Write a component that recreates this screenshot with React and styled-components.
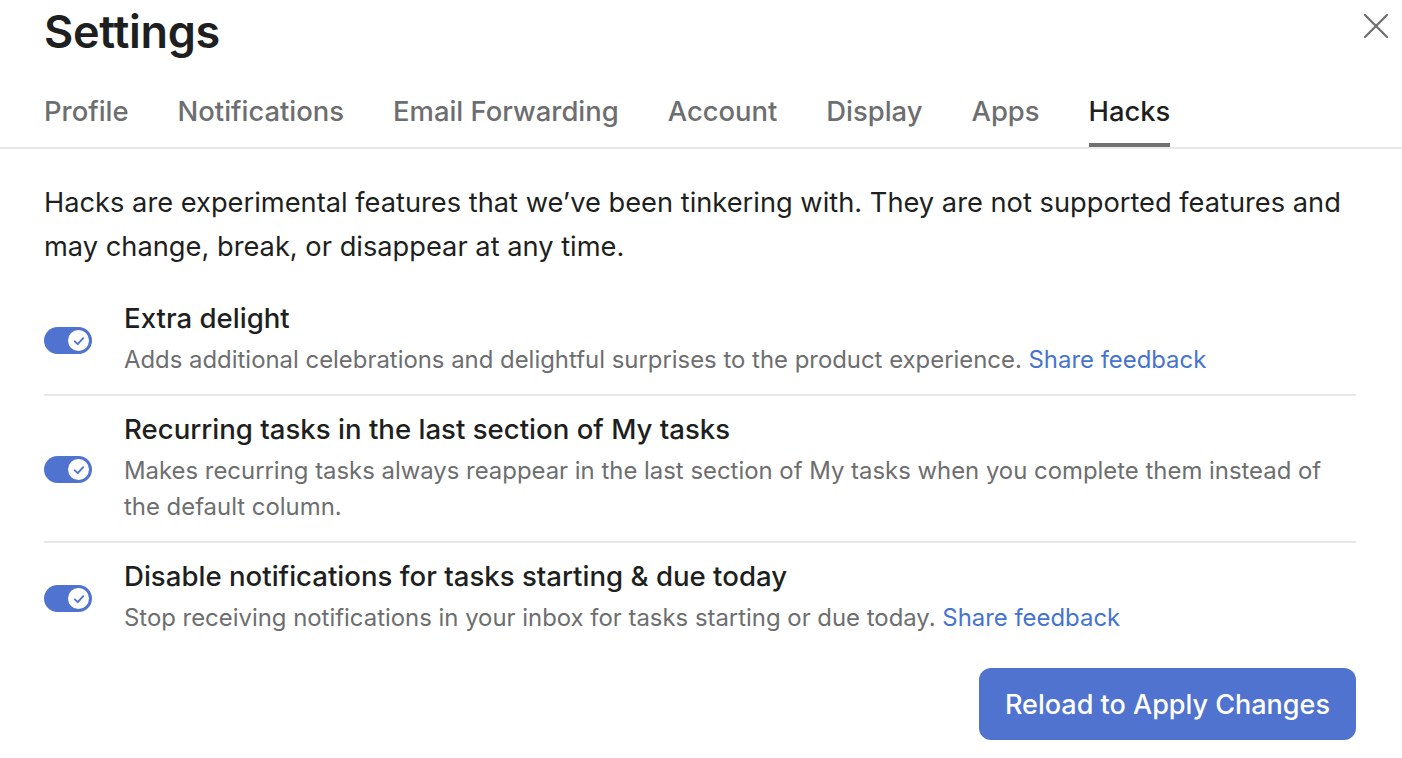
import React from "react";
import styled, { createGlobalStyle } from "styled-components";

const Global = createGlobalStyle`
  html, body { margin: 0; padding: 0; background: #ffffff; }
  body { font-family: Inter, "Noto Sans", "Liberation Sans", sans-serif; color: #1e1f21; }
  * { box-sizing: border-box; }
`;

const Page = styled.div`
  width: 1402px;
  height: 758px;
  background: #fff;
  overflow: hidden;
  display: flex;
  flex-direction: column;
`;

const Header = styled.div`
  position: relative;
  padding: 6px 44px 0 44px;
`;

const Title = styled.h1`
  margin: 0;
  font-size: 45px;
  line-height: 52px;
  font-weight: 600;
  letter-spacing: -0.3px;
  color: #1e1f21;
`;

const CloseButton = styled.button`
  position: absolute;
  top: 12px;
  right: 12px;
  width: 28px;
  height: 28px;
  padding: 0;
  border: none;
  background: transparent;
  display: flex;
  align-items: center;
  justify-content: center;
  cursor: pointer;
`;

const TabBar = styled.div`
  display: flex;
  gap: 49px;
  padding: 0 44px;
  margin-top: 37px;
  border-bottom: 2px solid #e8e8e9;
`;

const Tab = styled.div`
  font-size: 27.4px;
  line-height: 32px;
  font-weight: 500;
  white-space: nowrap;
  color: ${(p) => (p.$active ? "#1e1f21" : "#6d6e6f")};
  padding-bottom: 16px;
  border-bottom: 4px solid ${(p) => (p.$active ? "#6f6f70" : "transparent")};
`;

const Body = styled.div`
  padding: 32px 46px 0 44px;
  display: flex;
  flex-direction: column;
`;

const Intro = styled.p`
  margin: 0 0 16px 0;
  font-size: 27.25px;
  line-height: 44px;
  color: #1e1f21;
`;

const Row = styled.div`
  display: flex;
  gap: 32px;
  padding: 15px 0 16px 0;
  border-bottom: ${(p) => (p.$last ? "none" : "2px solid #e8e8e9")};
`;

const ToggleTrack = styled.div`
  flex: none;
  width: 48px;
  height: 27px;
  margin-top: ${(p) => p.$top}px;
  border-radius: 14px;
  background: #4f73cf;
  position: relative;
`;

const Knob = styled.div`
  position: absolute;
  right: 3px;
  top: 3px;
  width: 21px;
  height: 21px;
  border-radius: 50%;
  background: #fff;
  display: flex;
  align-items: center;
  justify-content: center;
`;

const RowText = styled.div`
  display: flex;
  flex-direction: column;
`;

const RowTitle = styled.div`
  font-size: 27.6px;
  line-height: 36px;
  font-weight: 500;
  color: #1e1f21;
  margin-bottom: 6px;
`;

const RowDesc = styled.div`
  font-size: 23.9px;
  line-height: 36px;
  color: #6d6e6f;
`;

const Link = styled.a`
  color: #4573d2;
  text-decoration: none;
`;

const Footer = styled.div`
  display: flex;
  justify-content: flex-end;
  margin-top: 16px;
`;

const PrimaryButton = styled.button`
  height: 72px;
  padding: 0 26px;
  border: none;
  border-radius: 12px;
  background: #5073cf;
  color: #fff;
  font-family: inherit;
  font-size: 27px;
  font-weight: 500;
  cursor: pointer;
`;

const Toggle = ({ top }) => (
  <ToggleTrack $top={top}>
    <Knob>
      <svg width="14" height="14" viewBox="0 0 12 12" fill="none">
        <path d="M2.4 6.3 L4.9 8.7 L9.6 3.6" stroke="#4f73cf" strokeWidth="1.6" strokeLinecap="round" strokeLinejoin="round" />
      </svg>
    </Knob>
  </ToggleTrack>
);

const tabs = ["Profile", "Notifications", "Email Forwarding", "Account", "Display", "Apps", "Hacks"];

export default function App() {
  return (
    <Page>
      <Global />
      <Header>
        <Title>Settings</Title>
        <CloseButton aria-label="Close">
          <svg width="26" height="26" viewBox="0 0 26 26" fill="none">
            <path d="M2 2 L24 24 M24 2 L2 24" stroke="#6d6e6f" strokeWidth="2.2" strokeLinecap="round" />
          </svg>
        </CloseButton>
      </Header>
      <TabBar>
        {tabs.map((t) => (
          <Tab key={t} $active={t === "Hacks"}>{t}</Tab>
        ))}
      </TabBar>
      <Body>
        <Intro>
          Hacks are experimental features that we’ve been tinkering with. They are not supported features and may change, break, or disappear at any time.
        </Intro>
        <Row>
          <Toggle top={27} />
          <RowText>
            <RowTitle>Extra delight</RowTitle>
            <RowDesc>
              Adds additional celebrations and delightful surprises to the product experience. <Link href="#">Share feedback</Link>
            </RowDesc>
          </RowText>
        </Row>
        <Row>
          <Toggle top={45} />
          <RowText>
            <RowTitle>Recurring tasks in the last section of My tasks</RowTitle>
            <RowDesc>
              Makes recurring tasks always reappear in the last section of My tasks when you complete them instead of the default column.
            </RowDesc>
          </RowText>
        </Row>
        <Row $last>
          <Toggle top={27} />
          <RowText>
            <RowTitle>Disable notifications for tasks starting &amp; due today</RowTitle>
            <RowDesc>
              Stop receiving notifications in your inbox for tasks starting or due today. <Link href="#">Share feedback</Link>
            </RowDesc>
          </RowText>
        </Row>
        <Footer>
          <PrimaryButton>Reload to Apply Changes</PrimaryButton>
        </Footer>
      </Body>
    </Page>
  );
}
